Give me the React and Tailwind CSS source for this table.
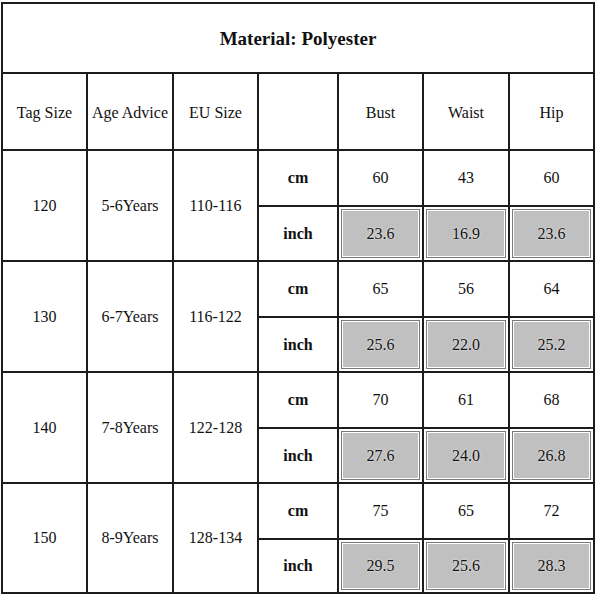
import React from 'react';

const groups = [
  { tag: '120', age: '5-6Years', eu: '110-116', cm: ['60', '43', '60'], inch: ['23.6', '16.9', '23.6'] },
  { tag: '130', age: '6-7Years', eu: '116-122', cm: ['65', '56', '64'], inch: ['25.6', '22.0', '25.2'] },
  { tag: '140', age: '7-8Years', eu: '122-128', cm: ['70', '61', '68'], inch: ['27.6', '24.0', '26.8'] },
  { tag: '150', age: '8-9Years', eu: '128-134', cm: ['75', '65', '72'], inch: ['29.5', '25.6', '28.3'] },
];

const cell = 'bg-white flex items-center justify-center text-[16px] text-[#111]';

const App = () => {
  return (
    <div className="w-[600px] h-[600px] bg-white font-['Liberation_Serif','Times_New_Roman',serif]">
      <div className="ml-[1px] pt-[2px]">
        <div className="inline-grid bg-[#1c1c1c] p-[2px] gap-[2px] grid-cols-[83px_84px_83px_78px_83px_84px_83px] grid-rows-[68px_75px_54px_53px_54px_53px_54px_53px_54px_52px]">
          <div className={`${cell} col-span-7 font-bold text-[19px] pt-[3px]`}>Material: Polyester</div>

          {['Tag Size', 'Age Advice', 'EU Size', '', 'Bust', 'Waist', 'Hip'].map((h, i) => (
            <div key={i} className={`${cell} pt-[3px]`}>{h}</div>
          ))}

          {groups.map((g) => (
            <React.Fragment key={g.tag}>
              <div className={`${cell} row-span-2`}>{g.tag}</div>
              <div className={`${cell} row-span-2`}>{g.age}</div>
              <div className={`${cell} row-span-2`}>{g.eu}</div>
              <div className={`${cell} font-bold text-[15px]`}>cm</div>
              {g.cm.map((v, i) => (
                <div key={'c' + i} className={cell}>{v}</div>
              ))}
              <div className={`${cell} font-bold text-[15px]`}>inch</div>
              {g.inch.map((v, i) => (
                <div key={'i' + i} className="bg-white p-[2px] flex">
                  <div className="flex-1 flex items-center justify-center bg-[#c0c0c0] border border-[#7a7a7a] shadow-[inset_0_0_0_1px_#ffffff] text-[16px] text-[#111] [text-shadow:0_0_2px_#ffffff]">
                    {v}
                  </div>
                </div>
              ))}
            </React.Fragment>
          ))}
        </div>
      </div>
    </div>
  );
};

export default App;
